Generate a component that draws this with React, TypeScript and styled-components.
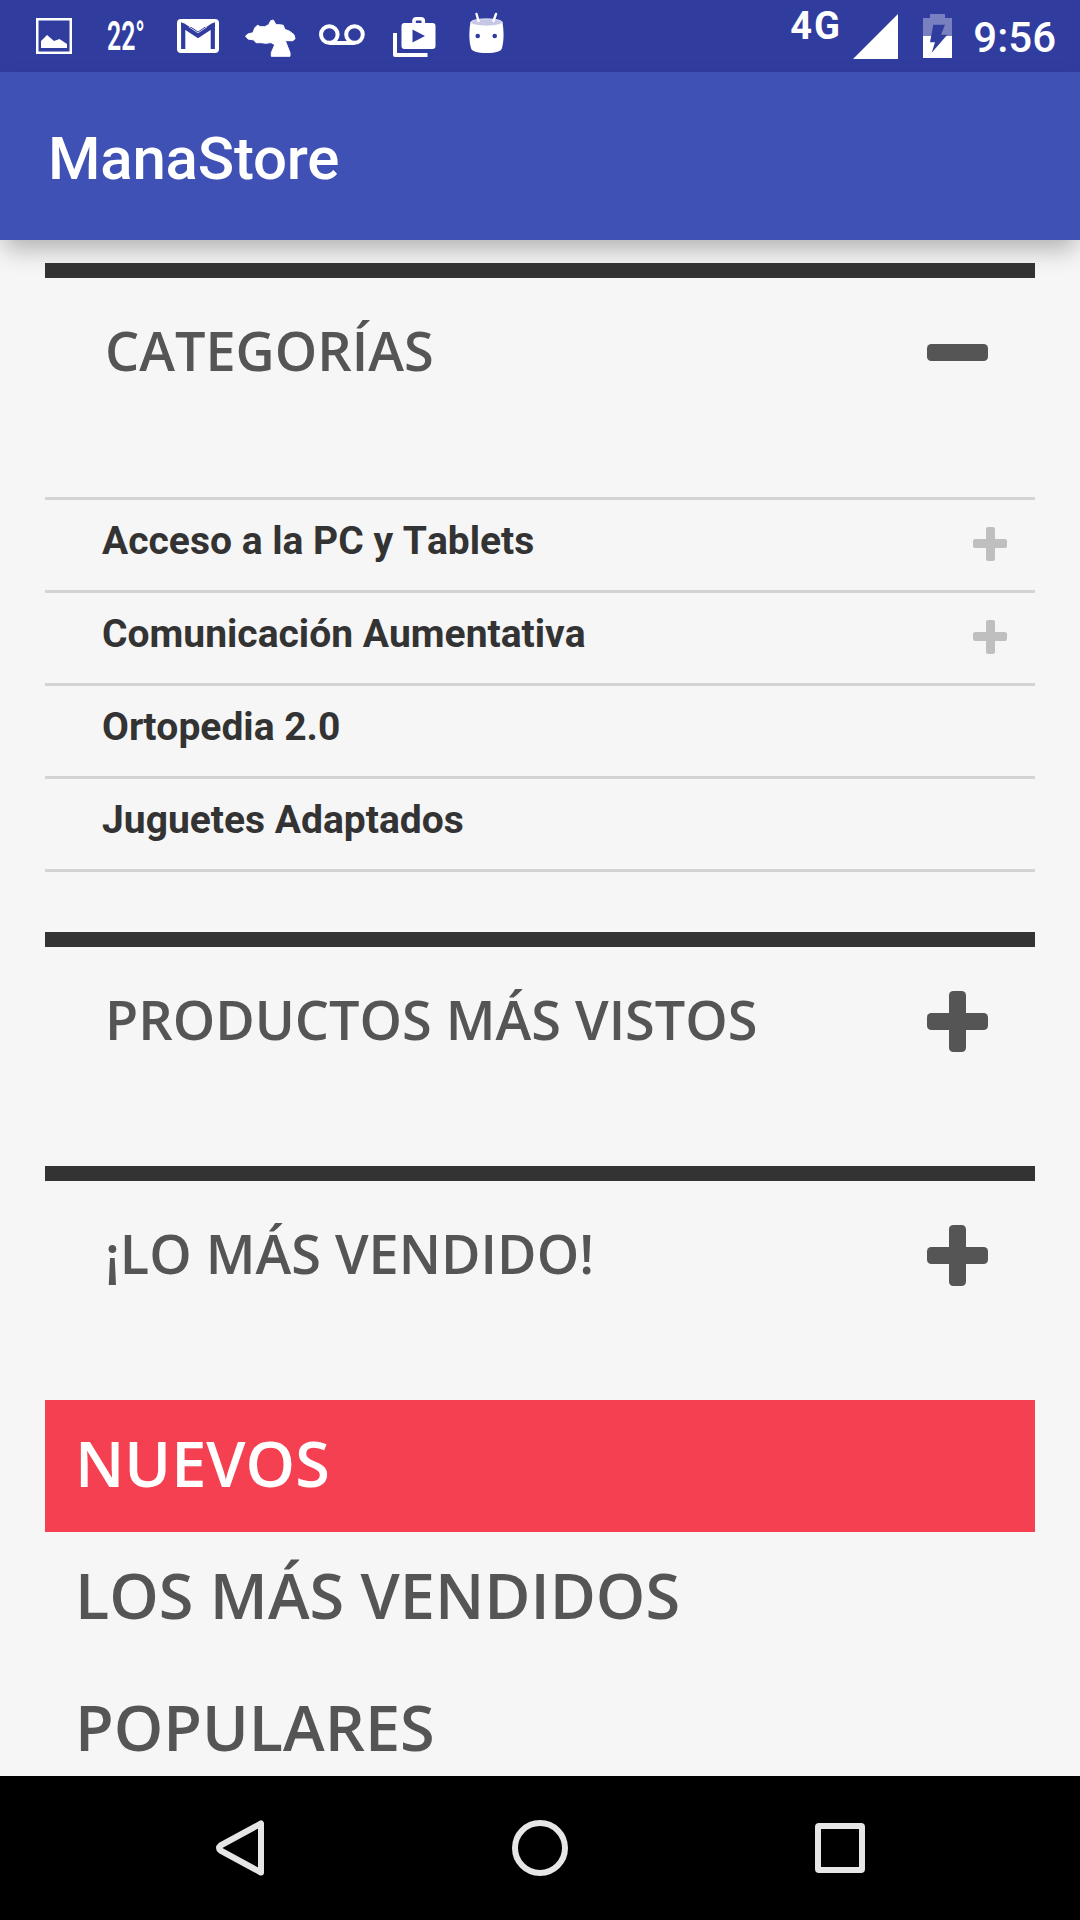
import React from "react";
import styled, { createGlobalStyle } from "styled-components";

const GlobalStyle = createGlobalStyle`
  *, *::before, *::after { box-sizing: border-box; }
  html, body { margin: 0; padding: 0; background: #f6f6f6; }
  h1, h2, ul { margin: 0; padding: 0; font-weight: inherit; }
`;

const Screen = styled.div`
  width: 1080px;
  height: 1920px;
  display: flex;
  flex-direction: column;
  overflow: hidden;
  background: #f6f6f6;
  font-family: Roboto, "Liberation Sans", sans-serif;
`;

const StatusBar = styled.header`
  flex: none;
  height: 72px;
  display: flex;
  justify-content: space-between;
  padding: 0 24px 0 36px;
  background: #303d9f;
  color: #fff;
`;

const StatusGroup = styled.div`
  display: flex;
  align-items: flex-start;
`;

const Glyph = styled.svg<{ $top: number; $gap?: number }>`
  flex: none;
  display: block;
  margin-top: ${(p) => p.$top}px;
  margin-left: ${(p) => p.$gap ?? 0}px;
`;

const Temperature = styled.span`
  width: 37px;
  height: 72px;
  margin: 0 33px 0 35px;
  font-size: 40px;
  font-weight: 600;
  line-height: 73px;
  white-space: nowrap;
  transform: scaleX(0.62);
  transform-origin: 0 50%;
`;

const NetworkType = styled.span`
  width: 63px;
  font-size: 38px;
  font-weight: 700;
  line-height: 53px;
  letter-spacing: 2px;
`;

const Clock = styled.span`
  margin-left: 21px;
  font-size: 42px;
  font-weight: 500;
  line-height: 76px;
`;

const AppBar = styled.div`
  flex: none;
  position: relative;
  z-index: 1;
  height: 168px;
  display: flex;
  align-items: center;
  padding: 5px 48px 0;
  background: #3f51b5;
  box-shadow: 0 12px 24px -4px rgba(0, 0, 0, 0.3);
`;

const AppTitle = styled.h1`
  color: #fff;
  font-size: 60px;
  font-weight: 500;
  line-height: 72px;
  letter-spacing: -0.2px;
`;

const Content = styled.main`
  flex: 1;
  min-height: 0;
  overflow: hidden;
  padding: 23px 45px 0;
`;

const SectionHeader = styled.div`
  height: 234px;
  display: flex;
  justify-content: space-between;
  align-items: flex-start;
  padding: 35px 47px 0 60px;
  border-top: 15px solid #333;
  color: #555;
`;

const SectionTitle = styled.h2`
  font-family: "Open Sans", sans-serif;
  font-size: 54px;
  font-weight: 600;
  line-height: 74px;
  white-space: nowrap;
`;

const Toggle = styled.span<{ $size: number; $bar: number; $open?: boolean }>`
  flex: none;
  display: grid;
  place-items: center;
  width: ${(p) => p.$size}px;
  height: ${(p) => p.$size}px;

  &::before,
  &::after {
    content: "";
    grid-area: 1 / 1;
    border-radius: ${(p) => p.$bar / 4}px;
    background: currentColor;
  }
  &::before {
    width: 100%;
    height: ${(p) => p.$bar}px;
  }
  &::after {
    display: ${(p) => (p.$open ? "none" : "block")};
    width: ${(p) => p.$bar}px;
    height: 100%;
  }
`;

const SectionToggle = styled(Toggle)`
  margin-top: 9px;
`;

const RowToggle = styled(Toggle)`
  margin-bottom: 3px;
`;

const CategoryList = styled.ul`
  list-style: none;
  margin-bottom: 60px;
  border-top: 3px solid #d3d3d3;
`;

const CategoryRow = styled.li`
  height: 93px;
  display: flex;
  align-items: center;
  justify-content: space-between;
  padding: 0 28px 0 57px;
  border-bottom: 3px solid #d3d3d3;
  color: #bfbfbf;
`;

const CategoryName = styled.span`
  padding-bottom: 8px;
  color: #333;
  font-size: 39px;
  font-weight: 700;
  line-height: 46px;
  font-kerning: none;
`;

const Tab = styled.div<{ $active?: boolean }>`
  height: 132px;
  padding-left: 30px;
  background: ${(p) => (p.$active ? "#f54051" : "transparent")};
  color: ${(p) => (p.$active ? "#fff" : "#555")};
  font-family: "Open Sans", sans-serif;
  font-size: 63px;
  font-weight: 600;
  line-height: 126px;
  white-space: nowrap;
`;

const NavBar = styled.nav`
  flex: none;
  height: 144px;
  display: flex;
  align-items: center;
  justify-content: space-between;
  padding: 0 212px;
  background: #000;
`;

const NavIcon = styled.svg`
  display: block;
  fill: none;
  stroke: #e6e6e6;
  stroke-width: 6;
  stroke-linejoin: round;
`;

const PictureIcon = () => (
  <Glyph $top={18} width="36" height="36" viewBox="0 0 36 36">
    <rect x="1.25" y="1.25" width="33.5" height="33.5" fill="none" stroke="#fff" strokeWidth="2.5" />
    <path d="M5 30V23L11 17L18 23L23.5 21L31 26V30Z" fill="#fff" />
  </Glyph>
);

const MailIcon = () => (
  <Glyph $top={19} width="42" height="34" viewBox="0 0 42 34">
    <rect width="42" height="34" rx="4" fill="#fff" />
    <path d="M6.2 30V7L21 16.8L35.8 7V30" fill="none" stroke="#303d9f" strokeWidth="4.2" />
    <path d="M4.1 4.2H7L21 13.5L35 4.2H37.9V8H4.1Z" fill="#303d9f" />
    <path d="M7.5 3.6H34.5L21 12.6Z" fill="#fff" />
  </Glyph>
);

const CloudTreeIcon = () => (
  <Glyph $top={19} $gap={26} width="51" height="39" viewBox="0 0 51 39">
    <path
      d="M0.5 17L3 15L8 13.7L9.7 9L12.3 6.3L15.7 7.7H19.7L23.7 5.7L25.7 1.7L28.3 1L31 5.7H34.7L38.3 6.3L39.7 10.3L44.7 12.3L49 15.7L50 19.7L48 21.7H40.3L45 33.7V37.3H26.3V33.7L29.7 25.7L26 23.6L21 24.3L16 23.7H11L9 21L3 20Z"
      fill="#fff"
      stroke="#fff"
      strokeWidth="1"
      strokeLinejoin="round"
    />
  </Glyph>
);

const VoicemailIcon = () => (
  <Glyph $top={24} $gap={23} width="46" height="21" viewBox="0 0 46 21">
    <g fill="none" stroke="#fff" strokeWidth="4">
      <circle cx="10.3" cy="10.5" r="8.3" />
      <circle cx="35.5" cy="10.5" r="8.3" />
      <path d="M10.3 19H35.5" />
    </g>
  </Glyph>
);

const PlayStoreIcon = () => (
  <Glyph $top={17} $gap={28} width="43" height="40" viewBox="0 0 43 40">
    <path d="M2 16V38H34.5" fill="none" stroke="#fff" strokeWidth="4" strokeLinejoin="round" />
    <path d="M21 7V4Q21 1.8 23.5 1.8H28Q30.3 1.8 30.3 4V7" fill="none" stroke="#fff" strokeWidth="3.6" />
    <path
      fillRule="evenodd"
      d="M11.5 6H39.5Q42.5 6 42.5 9V29Q42.5 32 39.5 32H11.5Q8.5 32 8.5 29V9Q8.5 6 11.5 6ZM19.5 12.5V25.5L32 19Z"
      fill="#fff"
    />
  </Glyph>
);

const DroidIcon = () => (
  <Glyph $top={12} $gap={33} width="35" height="42" viewBox="0 0 35 42">
    <path d="M1.5 10C-.2 19 0 29 2 36Q3 41 17.5 41Q32 41 33 36C35 29 35 19 33.5 10Z" fill="#fff" />
    <ellipse cx="17.5" cy="10.3" rx="15.8" ry="3.6" fill="#c5c8e4" stroke="#fff" strokeWidth="0.6" />
    <path d="M7.5 2L9.5 9M27 2L24.5 9" stroke="#fff" strokeWidth="2.4" strokeLinecap="round" />
    <circle cx="8.7" cy="24" r="2.3" fill="#303d9f" />
    <circle cx="25.7" cy="24" r="2.3" fill="#303d9f" />
  </Glyph>
);

const SignalIcon = () => (
  <Glyph $top={14} width="45" height="45" viewBox="0 0 45 45">
    <path d="M0 45L45 0V45Z" fill="#fff" />
  </Glyph>
);

const BatteryIcon = () => (
  <Glyph $top={14} $gap={25} width="29" height="44" viewBox="0 0 29 44">
    <path d="M7 0H22V4H29V22H0V4H7Z" fill="#7880bf" />
    <path d="M0 22H29V44H0Z" fill="#fff" />
    <path d="M10.3 10.7H22L18 20.7H24.3L8.7 38.7L12 28.3H7Z" fill="#303d9f" />
  </Glyph>
);

const sections = ["PRODUCTOS MÁS VISTOS", "¡LO MÁS VENDIDO!"];

const categories = [
  { name: "Acceso a la PC y Tablets", expandable: true },
  { name: "Comunicación Aumentativa", expandable: true },
  { name: "Ortopedia 2.0", expandable: false },
  { name: "Juguetes Adaptados", expandable: false },
];

const tabs = ["NUEVOS", "LOS MÁS VENDIDOS", "POPULARES"];

const Section = ({ title, open }: { title: string; open?: boolean }) => (
  <SectionHeader>
    <SectionTitle>{title}</SectionTitle>
    <SectionToggle $size={61} $bar={17} $open={open} />
  </SectionHeader>
);

export default function App() {
  return (
    <>
      <GlobalStyle />
      <Screen>
        <StatusBar>
          <StatusGroup>
            <PictureIcon />
            <Temperature>22°</Temperature>
            <MailIcon />
            <CloudTreeIcon />
            <VoicemailIcon />
            <PlayStoreIcon />
            <DroidIcon />
          </StatusGroup>
          <StatusGroup>
            <NetworkType>4G</NetworkType>
            <SignalIcon />
            <BatteryIcon />
            <Clock>9:56</Clock>
          </StatusGroup>
        </StatusBar>
        <AppBar>
          <AppTitle>ManaStore</AppTitle>
        </AppBar>
        <Content>
          <Section title="CATEGORÍAS" open />
          <CategoryList>
            {categories.map((c) => (
              <CategoryRow key={c.name}>
                <CategoryName>{c.name}</CategoryName>
                {c.expandable && <RowToggle $size={34} $bar={9} />}
              </CategoryRow>
            ))}
          </CategoryList>
          {sections.map((title) => (
            <Section key={title} title={title} />
          ))}
          {tabs.map((label, i) => (
            <Tab key={label} $active={i === 0}>
              {label}
            </Tab>
          ))}
        </Content>
        <NavBar>
          <NavIcon width="56" height="56" viewBox="0 0 56 56">
            <path d="M49 3.5V52.5L8.5 30.5Q5.5 28 8.5 25.5Z" />
          </NavIcon>
          <NavIcon width="56" height="56" viewBox="0 0 56 56">
            <circle cx="28" cy="28" r="25" />
          </NavIcon>
          <NavIcon width="56" height="56" viewBox="0 0 56 56">
            <rect x="6" y="6" width="44" height="44" rx="1" />
          </NavIcon>
        </NavBar>
      </Screen>
    </>
  );
}
